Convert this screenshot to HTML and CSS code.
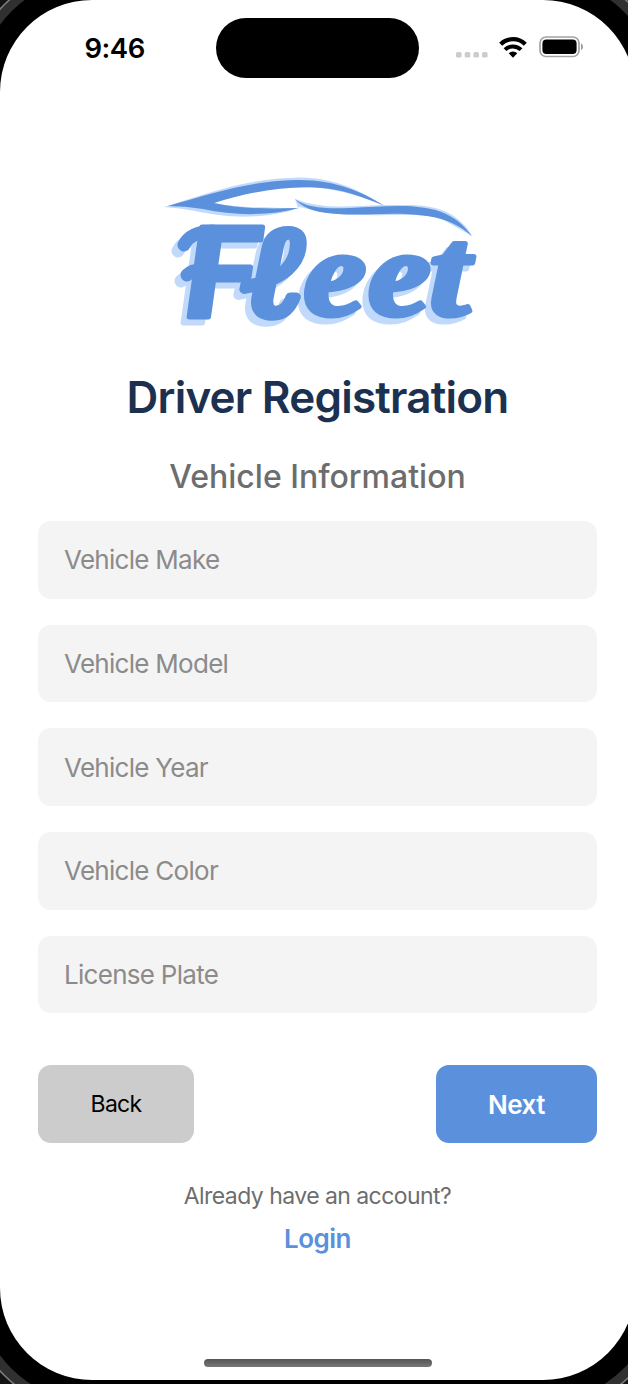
FILE: index.html
```html
<!DOCTYPE html>
<html lang="en">
<head>
<meta charset="utf-8">
<title>Driver Registration</title>
<link rel="stylesheet" href="styles.css">
</head>
<body>
<div class="screen">
  <header class="status">
    <span class="time">9:46</span>
    <div class="island"></div>
    <div class="indicators">
      <svg class="dots" width="32" height="6" viewBox="0 0 32 6" fill="#ccc"><rect width="5.6" height="5.6" rx="1.6"/><rect x="8.7" width="5.6" height="5.6" rx="1.6"/><rect x="17.4" width="5.6" height="5.6" rx="1.6"/><rect x="26" width="5.6" height="5.6" rx="1.6"/></svg>
      <svg class="wifi" width="28" height="21" viewBox="0 0 28 21" fill="none" stroke="#000" stroke-width="4.300"><path d="M1.700 7.200a17.600 17.600 0 0 1 24.600 0"/><path d="M6 12.700a11.300 11.300 0 0 1 16 0" stroke-width="4"/><path d="M9.700 16.200a6.400 6.400 0 0 1 8.600 0L14 20.700z" fill="#000" stroke="none"/></svg>
      <svg class="battery" width="45" height="22" viewBox="0 0 45 22"><rect x="1" y="1" width="39" height="19.500" rx="6" fill="none" stroke="#a3a3a3" stroke-width="1.700"/><rect x="3.400" y="3.500" width="34.200" height="14.500" rx="4" fill="#000"/><path d="M42 7.500c2.600 1.200 2.600 5.300 0 6.500z" fill="#999"/></svg>
    </div>
  </header>
  <main class="content">
    <svg class="logo" width="320" height="160" viewBox="160 170 320 160" role="img" aria-label="Fleet">
      <path fill="#c1dafb" d="M164 207C205 194 247 178 300 177.500C338 178 362 192 383 205C410 205 433 203 452 215C462 221 469 230 472 236L440 218C410 210 350 222 300 207L290 211C252 220 225 217 195 211Q180 208 164 207z"/>
      <path fill="#fff" d="M214 203C248 192 280 185 320 188C345 191 365 198 382 205C350 206 324 210 295 199L298 208C270 208 240 208 214 203z"/>
      <g fill="#5a90dc">
        <path d="M168 206C210 194 250 181 295 180C335 179 362 192 384 205.500C360 196 342 189 315 187.500C280 186 242 194 214 203C240 209 270 209 299 208C270 216 235 216 203 209Q185 206 168 206z"/>
        <path d="M295 199C307 208 325 209 350 208C390 206 422 203 446 214C459 220 467 229 472 236.500C461 226 447 219 427 216C394 211 366 216 338 214C320 213 304 210 295 199z"/>
      </g>
      <g class="word">
        <text transform="scale(1.15 1)" y="317"><tspan class="cap" x="160">F</tspan><tspan class="ell" x="210" y="315">ℓ</tspan><tspan class="low" x="264 320" y="315">ee</tspan><tspan class="tee" x="373">t</tspan></text>
        <path class="swash" d="M184 245Q190 232 213 231M187 275Q192 269 208 270"/>
      </g>
    </svg>
    <h1 class="title">Driver Registration</h1>
    <h2 class="subtitle">Vehicle Information</h2>
    <form class="form">
      <input class="field" placeholder="Vehicle Make" aria-label="Vehicle Make">
      <input class="field" placeholder="Vehicle Model" aria-label="Vehicle Model">
      <input class="field" placeholder="Vehicle Year" aria-label="Vehicle Year">
      <input class="field" placeholder="Vehicle Color" aria-label="Vehicle Color">
      <input class="field" placeholder="License Plate" aria-label="License Plate">
      <div class="actions">
        <button class="btn back" type="button">Back</button>
        <button class="btn next" type="button">Next</button>
      </div>
    </form>
    <p class="question">Already have an account?</p>
    <a class="login">Login</a>
  </main>
  <div class="home"></div>
</div>
</body>
</html>
```
FILE: styles.css
```css
* { box-sizing: border-box; }
html { overflow: hidden; }
body {
  margin: 0;
  width: 628px;
  height: 1384px;
  overflow: hidden;
  background: #000;
  font-family: Inter, "Liberation Sans", sans-serif;
}
.screen {
  display: flex;
  flex-direction: column;
  width: 635px;
  height: 1380px;
  background: #fff;
  border-radius: 92px;
  box-shadow: 0 0 0 22px #000, 0 0 0 31px #303030, 0 0 0 32.500px #808080, 0 0 0 70px #141414;
}
.status {
  display: grid;
  grid-template-columns: 216px 203px 216px;
  height: 78px;
  padding-top: 18px;
}
.time {
  padding-left: 84.500px;
  font-size: 27.500px;
  font-weight: 600;
  line-height: 60px;
  letter-spacing: -0.500px;
}
.island { height: 60px; border-radius: 30px; background: #000; }
.indicators { display: flex; padding-left: 37px; }
.dots { margin-top: 34px; }
.wifi { margin: 19px 0 0 11px; }
.battery { margin: 18px 0 0 12px; }
.content { display: flex; flex-direction: column; align-items: center; padding: 92px 38px 0; }
.logo { display: block; flex: none; margin-left: 5px; overflow: visible; }
.word {
  fill: #5a90dc;
  stroke: #5a90dc;
  stroke-width: 5px;
  stroke-linejoin: round;
  filter: drop-shadow(-5.500px 6px 0 #c1dafb);
}
.cap { font: italic 700 124px Lato, sans-serif; stroke-width: 5px; }
.ell { font: italic 400 127px "Liberation Serif", serif; stroke-width: 9px; }
.low { font: italic 700 123px "Liberation Serif", serif; }
.tee { font: italic 700 128px "Liberation Serif", serif; }
.swash { fill: none; stroke-width: 13px; stroke-linecap: round; }
.title {
  margin: 37px 0 0;
  color: #1c3150;
  font-size: 44px;
  font-weight: 600;
  line-height: 60px;
  letter-spacing: -0.780px;
  white-space: nowrap;
}
.subtitle {
  margin: 30px 0 0;
  color: #6d6d6d;
  font-size: 32px;
  font-weight: 500;
  line-height: 40px;
  white-space: nowrap;
}
.form { display: flex; flex-direction: column; gap: 26px; width: 559px; margin-top: 24px; }
.field {
  height: 77.700px;
  padding: 0 26px;
  border: 0;
  border-radius: 13px;
  background: #f4f4f4;
  font: 400 26px Inter, "Liberation Sans", sans-serif;
  letter-spacing: -0.720px;
}
.field::placeholder { color: #8b8b8b; opacity: 1; }
.actions { display: flex; justify-content: space-between; margin-top: 26px; }
.btn { height: 78px; padding: 0; border: 0; border-radius: 13px; font-family: Inter, sans-serif; }
.back { width: 156px; background: #ccc; color: #000; font-size: 23px; letter-spacing: -0.700px; }
.next { width: 161px; background: #5a90dc; color: #fff; font-size: 26px; font-weight: 600; letter-spacing: -0.500px; }
.question { margin: 37px 0 0; color: #6d6d6d; font-size: 23px; line-height: 32px; letter-spacing: -0.550px; white-space: nowrap; }
.login { margin-top: 10px; color: #5a90dc; font-size: 26px; font-weight: 600; line-height: 34px; letter-spacing: -0.500px; }
.home { width: 228px; height: 8px; margin: auto auto 13px; border-radius: 4px; background: linear-gradient(#555, #777); }
```
